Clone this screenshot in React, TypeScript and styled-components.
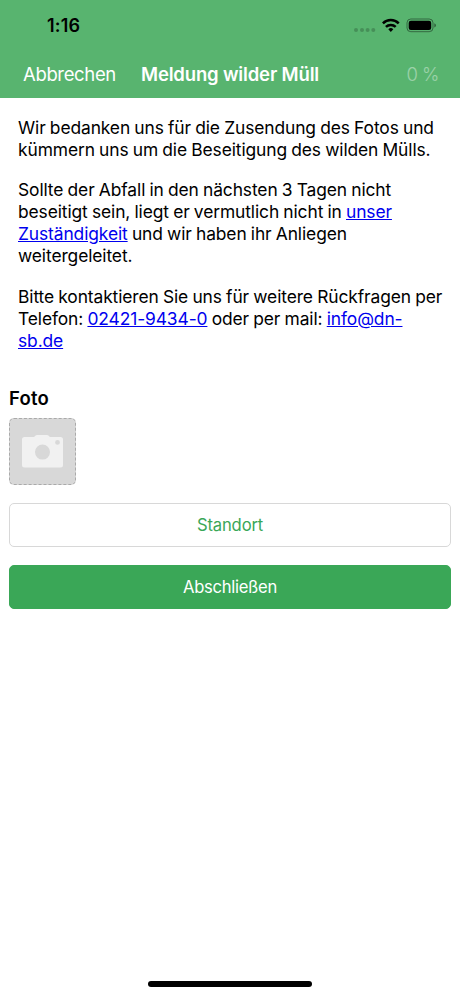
import React from 'react';
import styled, { createGlobalStyle } from 'styled-components';

const Global = createGlobalStyle`
  * { box-sizing: border-box; }
  body { margin: 0; background: #fff; font-family: Inter, "Liberation Sans", sans-serif; color: #000; }
`;

const Screen = styled.div`
  width: 460px;
  height: 996px;
  display: flex;
  flex-direction: column;
  overflow: hidden;
  background: #fff;
`;

const Header = styled.header`
  flex: none;
  height: 98px;
  background: #58b46f;
`;

const StatusBar = styled.div`
  height: 50px;
  padding: 1px 24px 0 47px;
  display: flex;
  align-items: center;
  justify-content: space-between;
`;

const Time = styled.span`
  font-size: 18px;
  font-weight: 600;
  letter-spacing: 0.15px;
`;

const NavBar = styled.nav`
  height: 48px;
  padding: 0 21px 0 23px;
  display: grid;
  grid-template-columns: 118px 1fr auto;
  align-items: center;
  color: #fff;
  font-size: 18.5px;
  white-space: nowrap;
`;

const NavButton = styled.span<{ $faded?: boolean }>`
  letter-spacing: -0.35px;
  word-spacing: -0.5px;
  font-weight: ${p => (p.$faded ? 300 : 400)};
  opacity: ${p => (p.$faded ? 0.4 : 1)};
`;

const Title = styled.span`
  font-weight: 600;
  letter-spacing: -0.16px;
`;

const Content = styled.main`
  flex: 1;
  padding: 19px 9px 0;
`;

const Message = styled.section`
  padding: 0 9px;
`;

const Paragraph = styled.p`
  margin: 0 0 18px;
  font-size: 17.4px;
  line-height: 22.1px;
  letter-spacing: -0.1px;
  word-spacing: -0.55px;
  white-space: nowrap;
`;

const Link = styled.a`
  color: #0000ee;
  text-decoration: underline;
`;

const Heading = styled.h2`
  margin: 35px 0 9px;
  font-size: 18.5px;
  line-height: 22px;
  font-weight: 600;
  letter-spacing: 0.2px;
`;

const PhotoSlot = styled.button`
  width: 67px;
  height: 67px;
  padding: 1px 0 0;
  display: flex;
  align-items: center;
  justify-content: center;
  border: 1px dashed #aaa;
  border-radius: 5px;
  background: #d8d8d8;
`;

const Action = styled.button<{ $primary?: boolean }>`
  display: block;
  width: 100%;
  height: 44px;
  margin-top: 18px;
  padding: 0;
  border: 1px solid ${p => (p.$primary ? '#3aa757' : '#d8d8d8')};
  border-radius: 5px;
  background: ${p => (p.$primary ? '#3aa757' : '#fff')};
  color: ${p => (p.$primary ? '#fff' : '#3aa757')};
  font: 400 16.6px Inter, sans-serif;
  letter-spacing: ${p => (p.$primary ? '-0.3px' : '-0.15px')};
`;

const Footer = styled.footer`
  height: 15px;
  display: flex;
  justify-content: center;
`;

const HomeIndicator = styled.div`
  width: 164px;
  height: 6px;
  border-radius: 3px;
  background: #000;
`;

const StatusIcons = () => (
  <svg width="83" height="19" viewBox="353 16 83 19" fill="none">
    <g fill="#000" opacity="0.2">
      <circle cx="356" cy="30" r="2" />
      <circle cx="362" cy="30" r="2" />
      <circle cx="367.6" cy="30" r="2" />
      <circle cx="373.3" cy="30" r="2" />
    </g>
    <g stroke="#000" strokeWidth="2.5">
      <path d="M382.9 23.3a11.2 11.2 0 0 1 15.8 0" />
      <path d="M385.9 26.9a7 7 0 0 1 9.8 0" />
    </g>
    <path d="M390.8 31.9l-2.5-2.6a3.6 3.6 0 0 1 5 0z" fill="#000" />
    <rect x="407" y="19" width="26" height="12.7" rx="3.8" stroke="#000" strokeOpacity="0.42" />
    <rect x="408.7" y="20.8" width="22.5" height="9.2" rx="2.2" fill="#000" />
    <path d="M434.4 23.2c2 .8 2 3.5 0 4.3z" fill="#000" fillOpacity="0.5" />
  </svg>
);

const CameraIcon = () => (
  <svg width="41" height="33" viewBox="0 0 41 33">
    <path
      fill="#f1f1f1"
      fillRule="evenodd"
      d="M2.5 2H12l1.3-1.3Q14 0 15 0h10q1 0 1.7.7L28 2h10.5Q41 2 41 4.5V30q0 2.5-2.5 2.5h-36Q0 32.500 0 30V4.5Q0 2 2.5 2ZM20.5 9.600a7.5 7.5 0 1 0 0 15 7.5 7.5 0 1 0 0-15ZM35.5 5a2.4 2.4 0 1 0 0 4.8 2.4 2.4 0 1 0 0-4.8Z"
    />
  </svg>
);

export default function App() {
  return (
    <Screen>
      <Global />
      <Header>
        <StatusBar>
          <Time>1:16</Time>
          <StatusIcons />
        </StatusBar>
        <NavBar>
          <NavButton>Abbrechen</NavButton>
          <Title>Meldung wilder Müll</Title>
          <NavButton $faded>0 %</NavButton>
        </NavBar>
      </Header>
      <Content>
        <Message>
          <Paragraph>Wir bedanken uns für die Zusendung des Fotos und<br />kümmern uns um die Beseitigung des wilden Mülls.</Paragraph>
          <Paragraph>Sollte der Abfall in den nächsten 3 Tagen nicht<br />beseitigt sein, liegt er vermutlich nicht in <Link href="#">unser<br />Zuständigkeit</Link> und wir haben ihr Anliegen<br />weitergeleitet.</Paragraph>
          <Paragraph>Bitte kontaktieren Sie uns für weitere Rückfragen per<br />Telefon: <Link href="#">02421-9434-0</Link> oder per mail: <Link href="#">info@dn-<br />sb.de</Link></Paragraph>
        </Message>
        <Heading>Foto</Heading>
        <PhotoSlot aria-label="Foto"><CameraIcon /></PhotoSlot>
        <Action>Standort</Action>
        <Action $primary>Abschließen</Action>
      </Content>
      <Footer><HomeIndicator /></Footer>
    </Screen>
  );
}
